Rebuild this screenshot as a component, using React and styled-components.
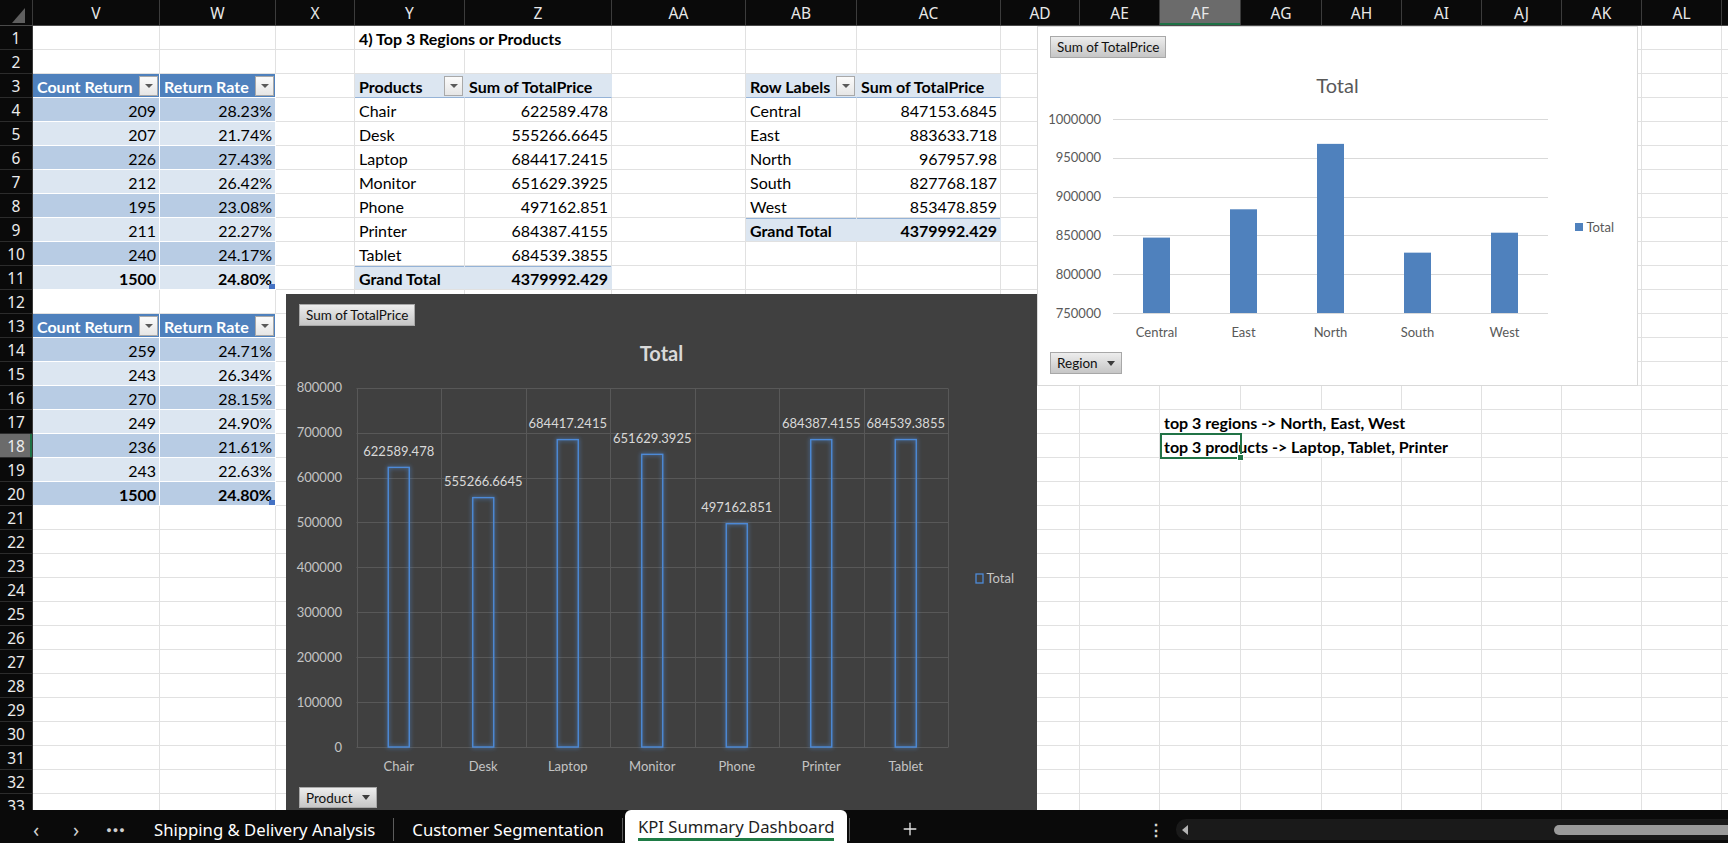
import React from "react";
import styled, { createGlobalStyle, css } from "styled-components";
import { Plus } from "lucide-react";

const GlobalStyle = createGlobalStyle`
  html, body {
    margin: 0;
    padding: 0;
    background: #0a0a0a;
    overflow: hidden;
  }
  body {
    font-family: "Lato", "Noto Sans", sans-serif;
  }
`;

const COLS = [
  ["V", 127], ["W", 116], ["X", 79], ["Y", 110], ["Z", 147], ["AA", 134],
  ["AB", 111], ["AC", 144], ["AD", 79], ["AE", 80], ["AF", 81], ["AG", 81],
  ["AH", 80], ["AI", 80], ["AJ", 80], ["AK", 80], ["AL", 80], ["AM", 80],
];
const TEMPLATE = COLS.map((c) => `${c[1]}px`).join(" ");
const ROWS = Array.from({ length: 33 }, (_, i) => i + 1);

const tableA = [
  ["209", "28.23%"], ["207", "21.74%"], ["226", "27.43%"], ["212", "26.42%"],
  ["195", "23.08%"], ["211", "22.27%"], ["240", "24.17%"],
];
const tableB = [
  ["259", "24.71%"], ["243", "26.34%"], ["270", "28.15%"], ["249", "24.90%"],
  ["236", "21.61%"], ["243", "22.63%"],
];
const products = [
  ["Chair", 622589.478, "622589.478"],
  ["Desk", 555266.6645, "555266.6645"],
  ["Laptop", 684417.2415, "684417.2415"],
  ["Monitor", 651629.3925, "651629.3925"],
  ["Phone", 497162.851, "497162.851"],
  ["Printer", 684387.4155, "684387.4155"],
  ["Tablet", 684539.3855, "684539.3855"],
];
const regions = [
  ["Central", 847153.6845, "847153.6845"],
  ["East", 883633.718, "883633.718"],
  ["North", 967957.98, "967957.98"],
  ["South", 827768.187, "827768.187"],
  ["West", 853478.859, "853478.859"],
];

function buildSheet() {
  const s = {};
  const put = (r, c, cell) => {
    s[r] = s[r] || {};
    s[r][c] = cell;
  };
  const tableHead = (r) => {
    put(r, "V", { text: "Count Return", kind: "tableHead", filter: true });
    put(r, "W", { text: "Return Rate", kind: "tableHead", filter: true });
  };

  put(1, "Y", { text: "4) Top 3 Regions or Products", kind: "bold", span: 2 });

  tableHead(3);
  tableA.forEach(([n, p], i) => {
    const kind = i % 2 === 0 ? "bandDark" : "bandLight";
    put(4 + i, "V", { text: n, kind, align: "right" });
    put(4 + i, "W", { text: p, kind, align: "right" });
  });
  put(11, "V", { text: "1500", kind: "bandLight", align: "right", bold: true });
  put(11, "W", { text: "24.80%", kind: "bandLight", align: "right", bold: true, handle: true });

  tableHead(13);
  tableB.forEach(([n, p], i) => {
    const kind = i % 2 === 0 ? "bandDark" : "bandLight";
    put(14 + i, "V", { text: n, kind, align: "right" });
    put(14 + i, "W", { text: p, kind, align: "right" });
  });
  put(20, "V", { text: "1500", kind: "bandDark", align: "right", bold: true });
  put(20, "W", { text: "24.80%", kind: "bandDark", align: "right", bold: true, handle: true });

  put(3, "Y", { text: "Products", kind: "pivotHead", filter: true });
  put(3, "Z", { text: "Sum of TotalPrice", kind: "pivotHead" });
  products.forEach(([name, , label], i) => {
    put(4 + i, "Y", { text: name });
    put(4 + i, "Z", { text: label, align: "right" });
  });
  put(11, "Y", { text: "Grand Total", kind: "pivotTotal" });
  put(11, "Z", { text: "4379992.429", kind: "pivotTotal", align: "right" });

  put(3, "AB", { text: "Row Labels", kind: "pivotHead", filter: true });
  put(3, "AC", { text: "Sum of TotalPrice", kind: "pivotHead" });
  regions.forEach(([name, , label], i) => {
    put(4 + i, "AB", { text: name });
    put(4 + i, "AC", { text: label, align: "right" });
  });
  put(9, "AB", { text: "Grand Total", kind: "pivotTotal" });
  put(9, "AC", { text: "4379992.429", kind: "pivotTotal", align: "right" });

  put(17, "AF", { text: "top 3 regions -> North, East, West", kind: "bold", span: 4 });
  put(18, "AF", { text: "top 3 products -> Laptop, Tablet, Printer", kind: "bold", span: 4 });
  return s;
}

const SHEET = buildSheet();

/* ---------- frame ---------- */

const Window = styled.div`
  width: 1728px;
  height: 843px;
  display: flex;
  flex-direction: column;
  background: #0a0a0a;
  overflow: hidden;
`;

const HeaderBar = styled.div`
  display: flex;
  flex: none;
  height: 26px;
  box-sizing: border-box;
  border-bottom: 1px solid #4a4a4a;
  background: #0a0a0a;
`;

const Corner = styled.div`
  flex: none;
  width: 33px;
  box-sizing: border-box;
  border-right: 1px solid #3a3a3a;
`;

const HeaderCells = styled.div`
  display: grid;
  grid-template-columns: ${TEMPLATE};
`;

const HeaderCell = styled.div`
  box-sizing: border-box;
  display: flex;
  align-items: center;
  justify-content: center;
  border-right: 1px solid #3c3c3c;
  font-family: "Noto Sans", sans-serif;
  font-size: 15.5px;
  color: #e8e8e8;
  background: ${(p) => (p.$active ? "#6b6b6b" : "transparent")};
  box-shadow: ${(p) => (p.$active ? "inset 0 -2px 0 #1e7145" : "none")};
`;

const Body = styled.div`
  display: flex;
  flex: 1;
  min-height: 0;
`;

const RowHeads = styled.div`
  flex: none;
  width: 33px;
  display: flex;
  flex-direction: column;
  overflow: hidden;
  box-sizing: border-box;
  border-right: 1px solid #3a3a3a;
`;

const RowHead = styled.div`
  flex: none;
  height: 24px;
  box-sizing: border-box;
  border-bottom: 1px solid #2c2c2c;
  display: flex;
  align-items: center;
  justify-content: center;
  font-family: "Noto Sans", sans-serif;
  font-size: 15.5px;
  color: #ececec;
  background: ${(p) => (p.$active ? "#6b6b6b" : "transparent")};
  box-shadow: ${(p) => (p.$active ? "inset -2px 0 0 #1e7145" : "none")};
`;

const Sheet = styled.div`
  position: relative;
  flex: 1;
  overflow: hidden;
  background: #fff;
`;

const SheetRow = styled.div`
  display: grid;
  grid-template-columns: ${TEMPLATE};
  height: 24px;
`;

const kindStyles = {
  plain: css``,
  bold: css`
    font-weight: 700;
  `,
  tableHead: css`
    background: #4f81bd;
    color: #fff;
    font-weight: 700;
    border-color: #fff;
  `,
  bandDark: css`
    background: #b8cce4;
    border-color: #fff;
  `,
  bandLight: css`
    background: #dce6f1;
    border-color: #fff;
  `,
  pivotHead: css`
    background: #dce6f1;
    font-weight: 700;
    border-right-color: #dce6f1;
    border-bottom-color: #95b3d7;
  `,
  pivotTotal: css`
    background: #dce6f1;
    font-weight: 700;
    border-right-color: #dce6f1;
    box-shadow: inset 0 1px 0 #95b3d7;
  `,
};

const Cell = styled.div`
  position: relative;
  box-sizing: border-box;
  grid-column: span ${(p) => p.$span};
  height: 24px;
  display: flex;
  align-items: center;
  justify-content: ${(p) => (p.$align === "right" ? "flex-end" : "space-between")};
  padding: 1px ${(p) => (p.$filter ? 1 : 3)}px 0 4px;
  border-right: 1px solid #e1e1e1;
  border-bottom: 1px solid #e1e1e1;
  font-size: 16px;
  color: #000;
  white-space: nowrap;
  overflow: hidden;
  ${(p) => kindStyles[p.$kind]}
  font-weight: ${(p) => (p.$bold ? 700 : undefined)};
`;

const FilterButton = styled.span`
  flex: none;
  width: 19px;
  height: 20px;
  box-sizing: border-box;
  background: linear-gradient(#fbfbfb, #e6e6e6);
  border: 1px solid #a9a9a9;
  display: flex;
  align-items: center;
  justify-content: center;

  &::after {
    content: "";
    border-left: 4px solid transparent;
    border-right: 4px solid transparent;
    border-top: 4px solid #5a5a5a;
  }
`;

const ResizeHandle = styled.span`
  position: absolute;
  right: 0;
  bottom: 0;
  width: 6px;
  height: 5px;
  background: #4472c4;
`;

const Selection = styled.div`
  position: absolute;
  left: 1127px;
  top: 407px;
  width: 82px;
  height: 26px;
  box-sizing: border-box;
  border: 2px solid #217346;
  pointer-events: none;

  &::after {
    content: "";
    position: absolute;
    right: -4px;
    bottom: -4px;
    width: 5px;
    height: 5px;
    background: #217346;
    border: 1px solid #fff;
  }
`;

/* ---------- charts ---------- */

const ChartFloat = styled.div`
  position: absolute;
  left: ${(p) => p.$left}px;
  top: ${(p) => p.$top}px;
  width: ${(p) => p.$width}px;
  height: ${(p) => p.$height}px;
  box-sizing: border-box;
  display: flex;
  flex-direction: column;
  align-items: stretch;
  background: ${(p) => (p.$dark ? "#404040" : "#fff")};
  border: ${(p) => (p.$dark ? "none" : "1px solid #d9d9d9")};
`;

const FieldButton = styled.div`
  align-self: flex-start;
  flex: none;
  height: ${(p) => p.$h || 22}px;
  margin: ${(p) => p.$mt}px 0 0 ${(p) => p.$ml}px;
  padding: 0 6px;
  box-sizing: border-box;
  display: flex;
  align-items: center;
  gap: 9px;
  background: linear-gradient(#ededed, #c6c6c6);
  border: 1px solid #a8a8a8;
  font-size: 13.5px;
  color: #111;
`;

const DropArrow = styled.span`
  border-left: 4px solid transparent;
  border-right: 4px solid transparent;
  border-top: 5px solid #3c3c3c;
`;

const ChartTitle = styled.div`
  flex: none;
  margin-top: ${(p) => p.$mt}px;
  height: 28px;
  line-height: 28px;
  text-align: center;
  font-size: 20px;
  font-weight: ${(p) => (p.$dark ? 700 : 400)};
  color: ${(p) => (p.$dark ? "#d9d9d9" : "#595959")};
`;

const PlotSvg = styled.svg`
  display: block;
  flex: none;
  font-family: "Lato", "Noto Sans", sans-serif;
  font-size: 13px;
`;

const px = (v) => Math.round(v) + 0.5;

function RegionPlot() {
  const left = 75;
  const right = 510;
  const top = 20;
  const bottom = 214;
  const min = 750000;
  const max = 1000000;
  const y = (v) => bottom - ((v - min) / (max - min)) * (bottom - top);
  const cw = (right - left) / regions.length;
  const ticks = [1000000, 950000, 900000, 850000, 800000, 750000];
  return (
    <PlotSvg width="599" height="247" viewBox="0 0 599 247">
      {ticks.map((t) => (
        <g key={t}>
          <line x1={left} x2={right} y1={px(y(t))} y2={px(y(t))} stroke="#d9d9d9" />
          <text x="63" y={y(t) + 4.5} textAnchor="end" fill="#595959">{t}</text>
        </g>
      ))}
      {regions.map(([name, v], i) => {
        const cx = left + cw * (i + 0.5);
        return (
          <g key={name}>
            <rect x={cx - 13.5} y={y(v)} width="27" height={bottom - y(v)} fill="#4f81bd" />
            <text x={cx} y="237.5" textAnchor="middle" fill="#595959">{name}</text>
          </g>
        );
      })}
      <rect x="537" y="124" width="8" height="8" fill="#4f81bd" />
      <text x="548.5" y="132.5" fill="#595959">Total</text>
    </PlotSvg>
  );
}

function ProductPlot() {
  const left = 70.5;
  const right = 662;
  const top = 20.7;
  const bottom = 380;
  const max = 800000;
  const y = (v) => bottom - (v / max) * (bottom - top);
  const cw = (right - left) / products.length;
  const ticks = [800000, 700000, 600000, 500000, 400000, 300000, 200000, 100000, 0];
  return (
    <PlotSvg width="751" height="414" viewBox="0 0 751 414">
      <defs>
        <filter id="barGlow" x="-60%" y="-10%" width="220%" height="120%">
          <feGaussianBlur in="SourceGraphic" stdDeviation="2" result="blur" />
          <feMerge>
            <feMergeNode in="blur" />
            <feMergeNode in="SourceGraphic" />
          </feMerge>
        </filter>
      </defs>
      {ticks.map((t) => (
        <g key={t}>
          <line x1={left} x2={right} y1={px(y(t))} y2={px(y(t))} stroke="#585858" />
          <text x="56" y={y(t) + 4.5} textAnchor="end" fill="#c4c4c4">{t}</text>
        </g>
      ))}
      {products.map((_, i) => (
        <line
          key={i}
          x1={px(left + cw * i)}
          x2={px(left + cw * i)}
          y1={px(y(max))}
          y2={px(bottom)}
          stroke="#585858"
        />
      ))}
      <line x1={px(right)} x2={px(right)} y1={px(y(max))} y2={px(bottom)} stroke="#585858" />
      {products.map(([name, v, label], i) => {
        const cx = left + cw * (i + 0.5);
        const t = y(v);
        return (
          <g key={name}>
            <rect
              x={cx - 10.5}
              y={t}
              width="21"
              height={bottom - t}
              fill="none"
              stroke="#4d8ad8"
              strokeWidth="1.4"
              filter="url(#barGlow)"
            />
            <text x={cx} y={t - 11.5} textAnchor="middle" fill="#d9d9d9">{label}</text>
            <text x={cx} y="404" textAnchor="middle" fill="#c4c4c4">{name}</text>
          </g>
        );
      })}
      <rect x="690" y="207" width="7" height="9" fill="none" stroke="#4d8ad8" strokeWidth="1.3" />
      <text x="700.5" y="215.5" fill="#c4c4c4">Total</text>
    </PlotSvg>
  );
}

/* ---------- tab bar ---------- */

const TabBar = styled.div`
  flex: none;
  height: 33px;
  display: flex;
  align-items: stretch;
  background: #0a0a0a;
  font-family: "Noto Sans", sans-serif;
  font-size: 16.7px;
  color: #fff;
`;

const TabsArea = styled.div`
  flex: 0 0 1140px;
  display: flex;
  align-items: stretch;
  padding-left: 16px;
  box-sizing: border-box;
`;

const NavButton = styled.div`
  flex: none;
  width: 40px;
  display: flex;
  align-items: center;
  justify-content: center;
  padding-top: 6px;
  box-sizing: border-box;
  color: #cfcfcf;
  font-size: ${(p) => p.$size || 16}px;
  letter-spacing: ${(p) => p.$spacing || 0}px;
`;

const Tab = styled.div`
  flex: none;
  display: flex;
  align-items: center;
  padding: 6px 18px 0 18px;
  white-space: nowrap;
`;

const ActiveTab = styled.div`
  flex: none;
  display: flex;
  align-items: flex-end;
  padding: 0 13px 2px 13px;
  background: #fff;
  color: #1f1f1f;
  border-radius: 6px 6px 0 0;
`;

const ActiveLabel = styled.span`
  line-height: 22px;
  border-bottom: 3px solid #1e7b45;
  white-space: nowrap;
`;

const TabDivider = styled.div`
  flex: none;
  width: 1px;
  height: 23px;
  align-self: flex-end;
  margin: 0 ${(p) => p.$mr || 0}px 2px ${(p) => p.$ml || 0}px;
  background: #5c5c5c;
`;

const PlusButton = styled.div`
  flex: none;
  width: 60px;
  margin-left: 30px;
  display: flex;
  align-items: center;
  justify-content: center;
  padding-top: 4px;
  color: #e6e6e6;
`;

const VDots = styled.div`
  flex: none;
  width: 32px;
  display: flex;
  align-items: center;
  justify-content: center;
  padding-top: 6px;
  color: #d6d6d6;
  font-size: 16px;
  font-weight: 700;
`;

const ScrollTrack = styled.div`
  flex: 1;
  margin: 9px 0 3px 4px;
  border-radius: 10px 0 0 10px;
  background: #1a1a1a;
  display: flex;
  align-items: center;
  padding-left: 6px;
`;

const ScrollArrow = styled.span`
  border-top: 5px solid transparent;
  border-bottom: 5px solid transparent;
  border-right: 6px solid #b3b3b3;
`;

const ScrollThumb = styled.span`
  margin-left: auto;
  width: 174px;
  height: 10px;
  border-radius: 5px 0 0 5px;
  background: #9b9b9b;
`;

const CornerMark = () => (
  <svg width="32" height="25" viewBox="0 0 32 25">
    <polygon points="25,8 25,23 12,23" fill="#5f5f5f" />
  </svg>
);

function SheetCells() {
  return ROWS.map((r) => {
    const rowCells = SHEET[r] || {};
    const out = [];
    for (let i = 0; i < COLS.length; i++) {
      const col = COLS[i][0];
      const c = rowCells[col];
      if (!c) {
        out.push(<Cell key={col} $span={1} $kind="plain" />);
        continue;
      }
      const span = c.span || 1;
      out.push(
        <Cell
          key={col}
          $span={span}
          $kind={c.kind || "plain"}
          $align={c.align}
          $bold={c.bold}
          $filter={c.filter}
        >
          <span>{c.text}</span>
          {c.filter && <FilterButton />}
          {c.handle && <ResizeHandle />}
        </Cell>
      );
      i += span - 1;
    }
    return <SheetRow key={r}>{out}</SheetRow>;
  });
}

export default function App() {
  return (
    <>
      <GlobalStyle />
      <Window>
        <HeaderBar>
          <Corner>
            <CornerMark />
          </Corner>
          <HeaderCells>
            {COLS.map(([name]) => (
              <HeaderCell key={name} $active={name === "AF"}>
                {name === "AM" ? "" : name}
              </HeaderCell>
            ))}
          </HeaderCells>
        </HeaderBar>

        <Body>
          <RowHeads>
            {ROWS.map((r) => (
              <RowHead key={r} $active={r === 18}>{r}</RowHead>
            ))}
          </RowHeads>

          <Sheet>
            <SheetCells />
            <Selection />

            <ChartFloat $left={1004} $top={0} $width={601} $height={360}>
              <FieldButton $mt={9} $ml={12}>Sum of TotalPrice</FieldButton>
              <ChartTitle $mt={13}>Total</ChartTitle>
              <RegionPlot />
              <FieldButton $mt={6} $ml={12}>
                Region <DropArrow />
              </FieldButton>
            </ChartFloat>

            <ChartFloat $dark $left={253} $top={268} $width={751} $height={530}>
              <FieldButton $mt={10} $ml={13}>Sum of TotalPrice</FieldButton>
              <ChartTitle $dark $mt={13}>Total</ChartTitle>
              <ProductPlot />
              <FieldButton $mt={6} $ml={13} $h={21}>
                Product <DropArrow />
              </FieldButton>
            </ChartFloat>
          </Sheet>
        </Body>

        <TabBar>
          <TabsArea>
            <NavButton $size={20}>‹</NavButton>
            <NavButton $size={20}>›</NavButton>
            <NavButton $size={9} $spacing={1}>●●●</NavButton>
            <Tab>Shipping &amp; Delivery Analysis</Tab>
            <TabDivider />
            <Tab>Customer Segmentation</Tab>
            <TabDivider $mr={2} />
            <ActiveTab>
              <ActiveLabel>KPI Summary Dashboard</ActiveLabel>
            </ActiveTab>
            <TabDivider $ml={2} />
            <PlusButton>
              <Plus size={20} strokeWidth={1.6} />
            </PlusButton>
          </TabsArea>
          <VDots>⋮</VDots>
          <ScrollTrack>
            <ScrollArrow />
            <ScrollThumb />
          </ScrollTrack>
        </TabBar>
      </Window>
    </>
  );
}
